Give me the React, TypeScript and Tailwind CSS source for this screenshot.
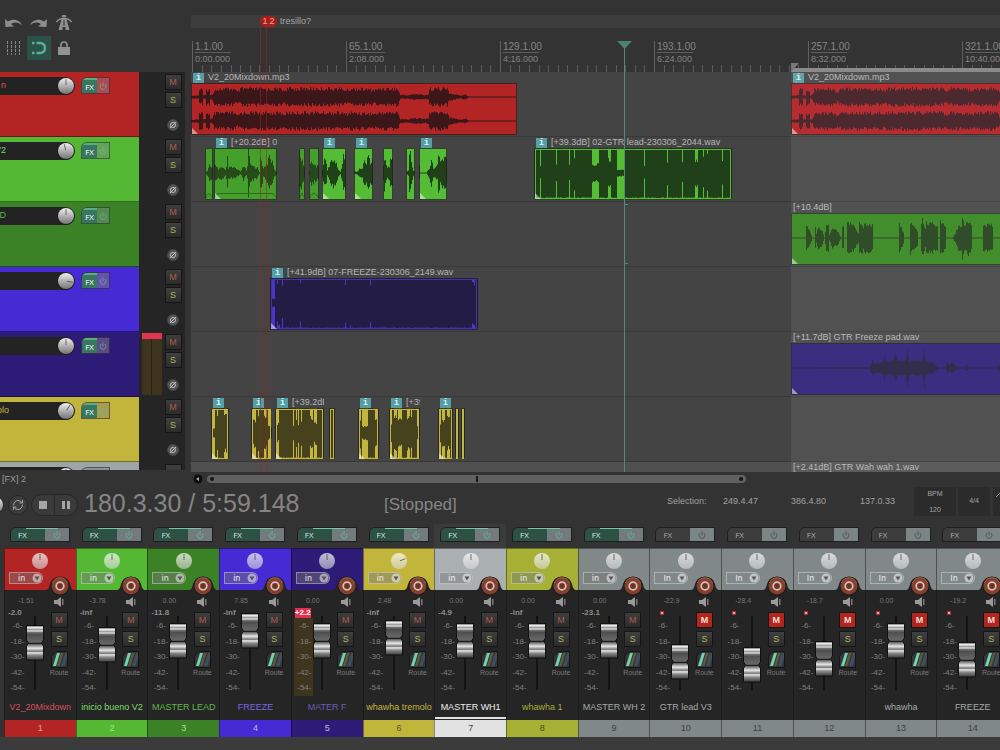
import React from "react";
import { Power, RefreshCw } from "lucide-react";

type Point = [number, number];

interface ClipProps {
    x: number;
    w: number;
    bg: string;
    ink: string;
    edge?: string;
    info?: boolean;
    label?: string;
    env: Point[];
    jitter?: number;
    stereo?: boolean;
    line?: boolean;
    fade?: boolean;
}

interface StripProps {
    name: string;
    color: string;
    text: string;
    numBg?: string;
    numText: string;
    vol: string;
    peak?: string;
    fader: number;
    pan?: number;
    muted?: boolean;
    clipped?: boolean;
    selected?: boolean;
    fxOn?: boolean;
}

interface TrackProps {
    name: string;
    color: string;
    text: string;
    pan: number;
    fxTint: string;
    meter?: boolean;
    folded?: boolean;
}

// ---------- waveforms ----------

const noise = (n: number) => {
    const v = Math.sin(n * 12.9898) * 43758.5453;
    return v - Math.floor(v);
};

const level = (env: Point[], x: number) => {
    for (let i = 1; i < env.length; i++) {
        const [x0, a0] = env[i - 1];
        const [x1, a1] = env[i];
        if (x <= x1) return a0 + ((a1 - a0) * (x - x0)) / Math.max(1, x1 - x0);
    }
    return 0;
};

// one column per pixel, each with its own height; columns at full level stay flat
const wavePath = (w: number, mid: number, amp: number, env: Point[], jitter: number, seed: number, flat: boolean) => {
    let d = "";
    for (let x = 0; x < w; x++) {
        const a = level(env, x) * amp;
        if (a < 0.1) continue;
        const j = flat ? (a < amp ? 0.3 : 0.02) : jitter;
        const up = a * (1 - j * noise(x + seed));
        const down = a * (1 - j * noise(x * 2 + seed + 7));
        d += `M${x} ${(mid - up).toFixed(1)}h1V${(mid + down).toFixed(1)}h-1Z`;
    }
    return d;
};

// full level with notches cut out: [center, half width, remaining level]
const carve = (w: number, notches: [number, number, number][]): Point[] => {
    const env: Point[] = [[0, 1]];
    notches.forEach(([c, h, a]) => {
        env.push([c - h, 1], [c - h + 1, a], [c + h - 1, a], [c + h, 1]);
    });
    env.push([w, 1]);
    return env;
};

const mixdown: Point[] = [
    [0, 0.15], [7, 0.2], [8, 0.9], [11, 0.9], [12, 0.2], [14, 0.2], [15, 0.9], [18, 0.9], [19, 0.2],
    [21, 0.3], [23, 0.9], [42, 1], [46, 0.6], [50, 1], [90, 0.95], [92, 0.75], [96, 1], [150, 1],
    [154, 0.8], [160, 1], [184, 0.85], [190, 1], [206, 1], [209, 0.25], [216, 0.2], [224, 0.35],
    [234, 0.25], [237, 0.3], [238, 1], [256, 1], [258, 0.4], [264, 0.3], [269, 0.15], [274, 0.3],
    [278, 0], [326, 0],
];

const leadWave: Point[] = [
    [0, 0], [14, 0], [15, 0.8], [17, 0.7], [20, 0.2], [21, 0], [23, 0], [24, 0.8], [25, 0.3], [27, 0.8],
    [31, 0.5], [33, 0], [35, 1], [37, 0.9], [38, 0.2], [41, 0.7], [46, 0.5], [49, 0.1], [50, 0], [51, 0.8],
    [52, 0.8], [53, 0], [55, 0], [56, 1.1], [62, 0.9], [67, 0.3], [68, 1.1], [71, 1], [72, 0.7], [73, 1],
    [81, 0.9], [82, 0], [107, 0], [108, 1], [112, 0.4], [113, 0], [118, 0], [119, 1.1], [126, 0.5],
    [127, 0], [129, 0], [130, 0.9], [131, 1.3], [134, 0.6], [135, 1.1], [146, 0.9], [147, 0], [148, 0],
    [149, 1.1], [154, 0.8], [155, 0], [161, 0], [164, 0.3], [166, 0.7], [168, 1], [170, 0.8], [171, 1.5],
    [173, 0.8], [177, 1.2], [180, 0.9], [181, 0], [191, 0], [192, 0.9], [201, 0.9], [202, 0], [211, 0],
];

const padWave: Point[] = [
    [0, 0], [78, 0.05], [81, 0.5], [84, 0.3], [90, 0.4], [92, 0.5], [93, 1], [94, 0.5], [102, 0.5],
    [104, 1], [106, 0.5], [114, 0.5], [116, 1.3], [118, 0.5], [131, 0.5], [133, 1.3], [134, 0.5],
    [142, 0.3], [146, 0.1], [147, 0], [154, 0.05], [156, 0.4], [158, 0.2], [160, 0.4], [165, 0.1],
    [168, 0], [172, 0], [175, 0.25], [178, 0], [205, 0], [207, 0.2], [211, 0.1],
];

const phrase: Point[] = [
    [0, 0.6], [4, 0.3], [7, 0.5], [11, 0.2], [12, 0.4], [13, 1.1], [14, 0.4], [20, 0.4], [26, 0.1],
    [29, 0.5], [32, 0.2], [33, 0.5], [34, 1.6], [35, 1.2], [36, 0.6], [43, 0.4], [45, 0.1], [46, 1.4],
    [47, 1.1], [49, 0.3], [52, 0.6], [55, 1.2], [58, 0.9], [60, 0.3], [62, 0.1], [63, 0],
];

const blob: Point[] = [[0, 0.3], [2, 1], [4, 0.9], [5, 0.2], [7, 0.5], [9, 1], [12, 1], [16, 0.3], [18, 0.1], [20, 0.6], [21, 1.4], [24, 1.3]];
const burst: Point[] = [[0, 0.1], [3, 0.1], [6, 0.4], [8, 0.3], [9, 0.9], [12, 0.7], [14, 1.4], [16, 0.8], [19, 1]];
const spike: Point[] = [[0, 0.1], [2, 0.2], [3, 1.2], [4, 1.6], [5, 0.8], [7, 0.2], [9, 0.1]];
const tail: Point[] = [[0, 0.5], [1, 0], [7, 0], [10, 0.4], [12, 1], [14, 0.3], [18, 0.6], [19, 1.4], [21, 0.9], [25, 1.2], [28, 1]];

const DIM = "#45a02b";
const GREEN = "#55bd35";
const MOSS = "#20401a";
const OLIVE = "#45421d";
const YELLOW = "#c2b640";

const yellow = (x: number, w: number, notches: [number, number, number][], rest: Partial<ClipProps> = {}): ClipProps => ({
    x, w, bg: YELLOW, ink: OLIVE, edge: YELLOW, env: carve(w, notches), ...rest,
});

const lanes: ClipProps[][] = [
    [
        { x: 0, w: 326, bg: "#b32424", ink: "#3b171a", info: true, label: "V2_20Mixdown.mp3", env: mixdown, stereo: true },
        { x: 600, w: 326, bg: "#b01c20", ink: "#3f191e", info: true, label: "V2_20Mixdown.mp3", env: mixdown, stereo: true },
    ],
    [
        { x: 14, w: 8, bg: DIM, ink: "#274a1b", env: [[0, 0], [2, 0.2], [4, 0.6], [8, 0.4]], line: true, fade: true },
        { x: 23, w: 63, bg: DIM, ink: "#274a1b", info: true, label: "[+20.2dB] 0", env: phrase, line: true, fade: true },
        { x: 108, w: 6, bg: DIM, ink: "#274a1b", env: [[0, 1.4], [3, 0.9], [6, 0.3]], fade: true },
        { x: 118, w: 10, bg: DIM, ink: "#274a1b", env: [[0, 0.2], [2, 1], [6, 0.6], [10, 0.4]], fade: true },
        { x: 131, w: 24, bg: GREEN, ink: MOSS, info: true, env: blob, line: true },
        { x: 163, w: 19, bg: GREEN, ink: MOSS, info: true, env: burst, line: true },
        { x: 192, w: 10, bg: GREEN, ink: MOSS, env: [[0, 0.5], [1, 1.2], [4, 0.4], [6, 0.5], [7, 1.1], [10, 0.9]] },
        { x: 215, w: 9, bg: GREEN, ink: MOSS, env: spike, line: true },
        { x: 228, w: 28, bg: GREEN, ink: MOSS, info: true, env: tail, line: true },
        {
            x: 343, w: 198, bg: GREEN, ink: MOSS, edge: GREEN, info: true,
            label: "[+39.3dB] 02-GTR lead-230306_2044.wav",
            env: carve(198, [
                [6, 1, 0.3], [22, 1, 0.4], [35, 1, 0.4], [40, 1, 0.8], [61, 4, 0.4], [75, 2, 0.6], [86, 4, 0.15],
                [110, 1, 0.3], [133, 1, 0.5], [148, 1, 0.5], [162, 2, 0.6], [169, 1, 0.8], [173, 1, 0.85], [188, 1, 0.6],
            ]),
        },
    ],
    [{ x: 600, w: 326, bg: "#34851c", ink: "#213f18", label: "[+10.4dB]", env: leadWave, line: true, jitter: 0.25 }],
    [{
        x: 79, w: 208, bg: "#4a35c8", ink: "#231c45", edge: "#4334a8", info: true,
        label: "[+41.9dB] 07-FREEZE-230306_2149.wav",
        env: carve(208, [[3, 2, 0.2], [8, 2, 0.95], [12, 1, 0.8], [30, 1, 0.95], [75, 1, 0.8], [80, 1, 0.95], [100, 1, 0.95], [203, 2, 0.9]]),
    }],
    [{ x: 600, w: 326, bg: "#2c1d76", ink: "#221d3c", label: "[+11.7dB] GTR Freeze pad.wav", env: padWave, line: true, jitter: 0.25 }],
    [
        yellow(20, 18, [[2, 2, 0.2], [6, 1, 0.7], [14, 2, 0.8], [16, 1, 0.4]], { info: true }),
        yellow(60, 21, [[3, 2, 0.6], [7, 1, 0.8], [14, 2, 0.7], [18, 3, 0.3]], { info: true }),
        yellow(84, 49, [[2, 2, 0.4], [18, 1, 0.3], [21, 1, 0.6], [23, 1, 0.4], [26, 1, 0.6], [36, 2, 0.7], [39, 3, 0.5]], { info: true, label: "[+39.2dB] 0" }),
        yellow(138, 6, []),
        yellow(167, 21, [[2, 1, 0.7], [6, 4, 0.3], [18, 2, 0.6]], { info: true }),
        yellow(198, 31, [[2, 1, 0.4], [6, 2, 0.8], [10, 3, 0.65], [19, 2, 0.7], [22, 1, 0.7], [28, 1, 0.3]], { info: true, label: "[+39.2dB]" }),
        yellow(247, 15, [[2, 1, 0.4], [5, 2, 0.6], [10, 2, 0.7]], { info: true }),
        yellow(264, 4, []),
        yellow(270, 4, []),
    ],
];

const Clip: React.FC<ClipProps> = ({ x, w, bg, ink, edge, info, label, env, jitter = 0.4, stereo, line, fade }: ClipProps) => {
    const mids = stereo ? [14, 38] : [25];
    const amp = edge ? 25 : stereo ? 10 : 16;
    return (
        <div className="absolute top-0" style={{ left: x, width: w }}>
            <div className="flex h-[11px] items-center gap-1 overflow-hidden whitespace-nowrap pl-[2px] text-[9px] leading-[11px] text-[#b4b4b4]">
                {info && (
                    <span className="flex h-[10px] w-[11px] shrink-0 items-center justify-center bg-[#559ea6] font-['Liberation_Mono'] text-[9px] font-bold leading-[10px] text-[#d8f0f0]">
                        i
                    </span>
                )}
                {label && <span>{label}</span>}
            </div>
            <svg className="block" width={w} height="52" viewBox={`0 0 ${w} 52`}>
                <rect width={w} height="52" fill={bg} />
                {mids.map((mid) => (
                    <g key={mid} fill={ink}>
                        {(line || stereo) && <rect x="0" y={mid - 0.5} width={w} height="1" />}
                        <path d={wavePath(w, mid, amp, env, jitter, x + mid, !!edge)} />
                    </g>
                ))}
                {fade && <path d={`M1 50V48L4 45.500H${w - 4}L${w - 1} 49`} fill="none" stroke="#2a6a1b" />}
                {edge && <rect x="1.5" y="1.5" width={w - 3} height="49" fill="none" stroke={edge} />}
                {w > 12 && <path d="M1 45L7 51H1Z" fill="#fff" opacity="0.5" />}
                <rect x="0.5" y="0.5" width={w - 1} height="51" fill="none" stroke="#1f1f1f" strokeOpacity="0.75" />
            </svg>
        </div>
    );
};

// ---------- shared controls ----------

const Knob: React.FC<{ angle?: number; label: string; dim?: boolean }> = ({ angle = 0, label, dim }) => (
    <label className="relative block size-[18px] shrink-0">
        <svg className="block size-[18px]" viewBox="0 0 18 18">
            <defs>
                <linearGradient id="knob" x1="0" y1="0" x2="0" y2="1">
                    <stop offset="0" stopColor="#efefef" />
                    <stop offset="1" stopColor="#737373" />
                </linearGradient>
                <linearGradient id="knobDim" x1="0" y1="0" x2="0" y2="1">
                    <stop offset="0" stopColor="#fff" stopOpacity="0.72" />
                    <stop offset="1" stopColor="#dcdcdc" stopOpacity="0.58" />
                </linearGradient>
            </defs>
            {!dim && <circle cx="9" cy="9.5" r="8.5" fill="#1a1a1a" />}
            <circle cx="9" cy="9" r="8" fill={dim ? "url(#knobDim)" : "url(#knob)"} />
            <path d="M9 2V8" stroke="#333" strokeOpacity="0.65" transform={`rotate(${angle} 9 9)`} />
        </svg>
        <input type="range" min="-100" max="100" defaultValue={angle} aria-label={label} className="absolute inset-0 size-full opacity-0" />
    </label>
);

const Mute: React.FC<{ on?: boolean }> = ({ on }) => (
    <button
        type="button"
        aria-label="Mute"
        className={`h-4 w-[17px] border border-[#161616] text-center text-[9px] leading-[13px] ${
            on ? "bg-[#b3261d] font-bold text-[#f3dcd8]" : "bg-gradient-to-b from-[#3e3e3e] to-[#2b2b2b] text-[#b05a4c]"
        }`}
    >
        M
    </button>
);

const Solo = () => (
    <button type="button" aria-label="Solo" className="h-4 w-[17px] border border-[#161616] bg-gradient-to-b from-[#404040] to-[#2b2b2b] text-center text-[9px] leading-[13px] text-[#b0b45a]">
        S
    </button>
);

// ---------- track panel ----------

const tracks: TrackProps[] = [
    { name: "n", color: "#b32424", text: "#e0515f", pan: 0, fxTint: "#a84d55" },
    { name: "V2", color: "#55b834", text: "#7ad865", pan: -15, fxTint: "#66a35a" },
    { name: "D", color: "#3b8126", text: "#58b445", pan: 0, fxTint: "#568a52" },
    { name: "", color: "#462ad4", text: "#8878e8", pan: 100, fxTint: "#6552ae" },
    { name: "", color: "#2c1c77", text: "#8878e8", pan: 0, fxTint: "#5b4a85", meter: true },
    { name: "olo", color: "#c2b53c", text: "#c2b53c", pan: 35, fxTint: "#a89b52" },
    { name: "", color: "#9ea5a6", text: "#fff", pan: 0, fxTint: "#8b9292", folded: true },
];

const Track: React.FC<TrackProps> = ({ name, color, text, pan, fxTint, meter, folded }: TrackProps) => (
    <li className="flex h-[65px] w-[185px] bg-[#252525]">
        <div className="flex w-[139px] items-start border-b border-black/40 pt-[5px]" style={{ backgroundColor: color }}>
            <div className="flex h-[18px] w-[75px] items-center justify-between rounded-r-full bg-[#232323]">
                <span className={`flex justify-end overflow-hidden text-[9px] ${name === "olo" ? "w-[9px]" : "w-[6px]"}`} style={{ color: text }}>
                    {name}
                </span>
                <Knob angle={pan} label="Track pan" />
            </div>
            <button type="button" className="ml-[6px] flex h-[17px] w-[29px] items-center overflow-hidden rounded-tl-md border border-black/40 text-white" style={{ backgroundColor: fxTint }}>
                {!folded && (
                    <span className="h-full w-[15px] border-t-2 border-[#58b07c] bg-[#377660] text-center font-['Open_Sans'] text-[8px] leading-[13px]">FX</span>
                )}
                <Power className="mx-auto size-[8px] text-[#70c090]" />
            </button>
        </div>
        <div className="flex w-[25px] justify-center pt-px">
            {meter && (
                <div className="flex h-[62px] w-[20px] flex-col bg-[#3f351f]">
                    <div className="h-[6px] bg-[#e5344f]" />
                    <div className="mx-auto w-px flex-1 bg-[#2a2418]" />
                </div>
            )}
        </div>
        <div className="flex w-[18px] flex-col items-center gap-[2px] pt-[2px]">
            {folded ? (
                <span className="h-4 w-[17px] border border-[#161616] bg-[#3c3c3c]" />
            ) : (
                <>
                    <Mute />
                    <Solo />
                    <button type="button" aria-label="Phase" className="mt-[9px]">
                        <svg className="size-3" viewBox="0 0 12 12" fill="none" stroke="#bbb">
                            <circle cx="6" cy="6" r="5.5" fill="#555" stroke="#444" />
                            <circle cx="6" cy="6" r="2.5" />
                            <path d="M3 9L9 3" />
                        </svg>
                    </button>
                </>
            )}
        </div>
    </li>
);

const Toolbar = () => (
    <div className="grid h-[72px] w-[76px] grid-cols-[26px_25px_25px] grid-rows-[24px_24px] place-items-center gap-y-px pt-[11px]">
        <button type="button" aria-label="Undo">
            <svg className="ml-px h-[11px] w-[19px]" viewBox="0 0 19 11" fill="#8e8e8e">
                <path d="M1 1L1.500 9L10 8.500L7 6C11 3.500 15 4.500 18 7.500C16 2.500 10 0 4 3.500Z" />
            </svg>
        </button>
        <button type="button" aria-label="Redo">
            <svg className="h-[11px] w-[19px]" viewBox="0 0 19 11" fill="#8e8e8e">
                <path d="M18 1L17.500 9L9 8.500L12 6C8 3.500 4 4.500 1 7.500C3 2.500 9 0 15 3.500Z" />
            </svg>
        </button>
        <button type="button" aria-label="Metronome">
            <svg className="size-4" viewBox="0 0 16 16" fill="#8e8e8e">
                <path d="M5.500 4H10.500L13.500 15H9.500V12H6.500V15H2.500Z" />
                <path d="M0.500 7C4 2 12 2 15.500 7" fill="none" stroke="#8e8e8e" strokeWidth="1.500" />
                <rect x="6" y="0" width="4" height="2" />
                <path d="M8 5V11" stroke="#333" />
            </svg>
        </button>
        <button type="button" aria-label="Grid lines">
            <svg className="h-[14px] w-[15px]" viewBox="0 0 15 14" stroke="#858585" strokeDasharray="3 1">
                <path d="M1.500 0V14M5.500 0V14M9.500 0V14M13.500 0V14" />
            </svg>
        </button>
        <button type="button" aria-label="Snap" className="flex size-6 items-center justify-center bg-[#2e5147]">
            <svg className="size-[14px]" viewBox="0 0 14 14" fill="none" stroke="#52b296" strokeWidth="2.500">
                <path d="M4.500 2H8A5 5 0 0 1 8 12H4.500M0 2H2.500M0 12H2.500" />
            </svg>
        </button>
        <button type="button" aria-label="Lock">
            <svg className="h-[14px] w-3" viewBox="0 0 12 14" fill="#929292">
                <rect y="6" width="12" height="8" />
                <path d="M3 7V4A3 3 0 0 1 9 4V7" fill="none" stroke="#929292" strokeWidth="1.600" />
            </svg>
        </button>
    </div>
);

// ---------- timeline ----------

const ruler = [
    ["1.1.00", "0:00.000"],
    ["65.1.00", "2:08.000"],
    ["129.1.00", "4:16.000"],
    ["193.1.00", "6:24.000"],
    ["257.1.00", "8:32.000"],
    ["321.1.00", "10:40.000"],
];

const Ruler = () => (
    <div className="relative h-[72px] pt-[15px]">
        <div className="h-[13px] bg-[#3c3c3c] pl-[69px]">
            <div className="flex h-[13px] items-center text-[9px] text-[#a6a6a6]">
                <span className="flex w-[17px] justify-center gap-[2px] rounded-full bg-[#a91f18] leading-[11px] text-[#e0a8a4]">
                    <span>1</span>
                    <span>2</span>
                </span>
                <span className="ml-[3px]">tresillo?</span>
            </div>
        </div>
        <ol className="mt-[13px] flex h-[31px] overflow-hidden pl-px">
            {ruler.map(([bar, time]) => (
                <li key={bar} className="flex w-[154px] shrink-0 flex-col border-l border-[#606060] text-[#858585]">
                    <span className="ml-[2px] w-9 border-b border-[#5c5c5c] pt-px text-[10px] leading-[10px]">{bar}</span>
                    <span className="ml-[2px] text-[9px] leading-[12px]">{time}</span>
                    <svg className="mt-auto h-[7px] w-[154px]" viewBox="0 0 154 7">
                        {Array.from({ length: 15 }, (_, i) => (
                            <rect key={i} x={Math.round((i + 1) * 9.63) - 1} y="0" width="1" height="7" fill="#5a5a5a" />
                        ))}
                    </svg>
                </li>
            ))}
        </ol>
        <div className="absolute bottom-0 left-[600px] right-0 h-1 bg-[#8a8a8a]" />
        <svg className="absolute bottom-0 left-[600px] h-[9px] w-2" viewBox="0 0 8 9" fill="#777">
            <path d="M0 0H8L0 9Z" />
        </svg>
    </div>
);

const Timeline = () => (
    <section aria-label="Arrange" className="relative min-w-0 flex-1 overflow-hidden">
        <Ruler />
        <div className="relative bg-[#444]">
            {lanes.map((clips, i) => (
                <div key={i} className="relative h-[65px] border-b border-[#393939]">
                    {clips.map((clip) => (
                        <Clip key={clip.x} {...clip} />
                    ))}
                </div>
            ))}
            <div className="relative h-[10px] overflow-hidden bg-[#505050]">
                <span className="absolute left-[602px] whitespace-nowrap text-[9px] leading-[10px] text-[#b4b4b4]">[+2.41dB] GTR Wah wah 1.wav</span>
            </div>
            <div className="pointer-events-none absolute inset-y-0 left-[600px] right-0 bg-white/[0.07]" />
        </div>
        {/* marker lines and edit cursor */}
        <div className="absolute bottom-0 left-[69px] top-[27px] w-[7px] border-x border-[#a02020]/55" />
        <div className="absolute bottom-0 left-[433px] top-[41px] w-px bg-[#53897a]" />
        <svg className="absolute left-[426px] top-[41px] h-[8px] w-[15px]" viewBox="0 0 15 8" fill="#4c8271">
            <path d="M0 0H15L7.500 8Z" />
        </svg>
        <div className="absolute left-[433px] top-[204px] h-[60px] w-[4px] border-y border-l border-[#53897a]" />
    </section>
);

// ---------- transport ----------

const Transport = () => (
    <section aria-label="Transport" className="flex h-[38px] items-center">
        <div className="-ml-[14px] shrink-0">
            <Knob label="Play rate" />
        </div>
        <button type="button" aria-label="Repeat" className="ml-[4px] flex size-5 shrink-0 items-center justify-center rounded-full border border-[#262626] bg-[#3c3c3c]">
            <RefreshCw className="size-3 text-[#a5a5a5]" />
        </button>
        <div className="ml-[3px] flex h-[22px] w-[47px] shrink-0 overflow-hidden rounded-full border border-[#262626] bg-[#3a3a3a]">
            <button type="button" aria-label="Stop" className="flex flex-1 items-center justify-center border-r border-[#2a2a2a]">
                <span className="size-2 bg-[#a5a5a5]" />
            </button>
            <button type="button" aria-label="Pause" className="flex flex-1 items-center justify-center gap-[2px]">
                <span className="h-2 w-[3px] bg-[#a5a5a5]" />
                <span className="h-2 w-[3px] bg-[#a5a5a5]" />
            </button>
        </div>
        <output className="ml-[6px] w-[300px] shrink-0 whitespace-nowrap pb-1 text-[25px] leading-[30px] text-[#858585]">180.3.30 / 5:59.148</output>
        <output className="flex-1 text-[17px] leading-5 text-[#858585]">[Stopped]</output>
        <dl className="flex shrink-0 pb-2 text-[9px] leading-3 text-[#a0a0a0]">
            <dt className="w-[56px]">Selection:</dt>
            <dd className="w-[68px]">249.4.47</dd>
            <dd className="w-[69px]">386.4.80</dd>
            <dd className="w-[54px]">137.0.33</dd>
        </dl>
        <label className="mb-2 flex h-[29px] w-[42px] shrink-0 flex-col items-center justify-between bg-[#2b2b2b] py-[2px] text-[7px] leading-[9px] text-[#a5a5a5]">
            BPM
            <input type="text" defaultValue="120" className="w-full bg-transparent text-center" />
        </label>
        <button type="button" className="mb-2 ml-[2px] h-[29px] w-[32px] shrink-0 bg-[#2b2b2b] text-[7px] text-[#a5a5a5]">4/4</button>
        <div className="mb-2 ml-[3px] h-[29px] w-[7px] shrink-0 bg-[#2b2b2b] pt-[6px]">
            <svg className="ml-[3px] h-1 w-1" viewBox="0 0 4 4">
                <path d="M0 4L4 0" stroke="#999" />
            </svg>
        </div>
    </section>
);

// ---------- mixer ----------

const GREY = "#808988";

const strips: StripProps[] = [
    { name: "V2_20Mixdown", color: "#b32424", text: "#d25358", numText: "#e8a0a0", vol: "-1.51", peak: "-2.0", fader: 18, fxOn: true },
    { name: "inicio bueno V2", color: "#55b834", text: "#7fdc66", numText: "#a0e888", vol: "-3.78", peak: "-inf", fader: 20, fxOn: true },
    { name: "MASTER LEAD", color: "#3b8126", text: "#5cba48", numText: "#b0dca4", vol: "0.00", peak: "-11.8", fader: 16, fxOn: true },
    { name: "FREEZE", color: "#462ad4", text: "#7868e0", numText: "#c0b8f0", vol: "7.85", peak: "-inf", fader: 6, fxOn: true },
    { name: "MATER F", color: "#2c1c77", text: "#6c5cb8", numText: "#c0b8e0", vol: "0.00", peak: "+2.2", fader: 16, clipped: true, fxOn: true },
    { name: "whawha tremolo", color: "#c2b53c", text: "#c2b53c", numText: "#5c5620", vol: "2.48", peak: "-inf", fader: 13, pan: 70, fxOn: true },
    { name: "MASTER WH1", color: "#aab0b1", text: "#f0f0f0", numBg: "#e2e2e2", numText: "#444", vol: "0.00", peak: "-4.9", fader: 16, selected: true, fxOn: true },
    { name: "whawha 1", color: "#a5b035", text: "#a5b035", numText: "#454b18", vol: "0.00", peak: "-inf", fader: 16, fxOn: true },
    { name: "MASTER WH 2", color: GREY, text: "#a3a8a8", numText: "#3c4242", vol: "0.00", peak: "-23.1", fader: 16, fxOn: true },
    { name: "GTR lead V3", color: GREY, text: "#a3a8a8", numText: "#3c4242", vol: "-22.9", fader: 37, muted: true },
    { name: "", color: GREY, text: "#a3a8a8", numText: "#3c4242", vol: "-28.4", fader: 40, muted: true },
    { name: "", color: GREY, text: "#a3a8a8", numText: "#3c4242", vol: "-18.7", fader: 34, muted: true },
    { name: "whawha", color: GREY, text: "#a3a8a8", numText: "#3c4242", vol: "0.00", fader: 16, muted: true },
    { name: "FREEZE", color: GREY, text: "#a3a8a8", numText: "#3c4242", vol: "-19.2", fader: 35, muted: true },
];

const Fader: React.FC<{ y: number }> = ({ y }) => (
    <label className="relative block h-[86px] w-[18px] shrink-0">
        <svg className="block h-[86px] w-[18px]" viewBox="0 0 18 86">
            <defs>
                <linearGradient id="cap" x1="0" y1="0" x2="0" y2="1">
                    <stop offset="0" stopColor="#4c4c4c" />
                    <stop offset="0.06" stopColor="#f0f0f0" />
                    <stop offset="0.12" stopColor="#9a9a9a" />
                    <stop offset="0.16" stopColor="#e0e0e0" />
                    <stop offset="0.2" stopColor="#707070" />
                    <stop offset="0.26" stopColor="#4e4e4e" />
                    <stop offset="0.46" stopColor="#666" />
                    <stop offset="0.52" stopColor="#444" />
                    <stop offset="0.66" stopColor="#e8e8e8" />
                    <stop offset="0.75" stopColor="#777" />
                    <stop offset="0.79" stopColor="#e8e8e8" />
                    <stop offset="0.86" stopColor="#888" />
                    <stop offset="1" stopColor="#3a3a3a" />
                </linearGradient>
            </defs>
            <rect x="8" y="9" width="2" height="74" fill="#121212" />
            <g transform={`translate(0 ${y})`}>
                <path d="M0.500 0.500H17.500V15L15.500 18L17.500 21V35H0.500V21L2.500 18L0.500 15Z" fill="url(#cap)" stroke="#111" />
                <path d="M3 18.500H15" stroke="#1c1c1c" />
            </g>
        </svg>
        <input type="range" min="0" max="50" defaultValue={50 - y} aria-label="Volume" className="absolute inset-0 size-full opacity-0" />
    </label>
);

const Strip: React.FC<StripProps & { index: number }> = (s) => (
    <article className="min-w-0">
        <div className={`h-6 pl-[6px] pt-[3px] ${s.selected ? "bg-[#3b3b3b]" : ""}`}>
            <button type="button" className="relative flex h-[15px] w-[60px] overflow-hidden rounded-tl-md border border-[#1e1e1e] text-white">
                <span className={`flex h-full flex-1 items-center pl-[7px] font-['Open_Sans'] text-[8px] ${s.fxOn ? "bg-[#2d5145] text-[#d8e8e0]" : "bg-[#3c3c3c] text-[#aaa]"}`}>
                    FX
                </span>
                <span className={`flex h-full w-[24px] items-center justify-center ${s.fxOn ? "bg-[#747b7c] text-[#62c8a0]" : "bg-[#7b8583] text-[#444]"}`}>
                    <Power className="size-[8px]" />
                </span>
                {s.fxOn && <span className="absolute left-[15px] top-0 h-px w-[32px] bg-[#74c8a0]" />}
            </button>
        </div>
        <header className="relative h-[42px] border-l border-t border-black/40 pt-[3px]" style={{ backgroundColor: s.color }}>
            <div className="flex justify-center">
                <Knob angle={s.pan} label="Pan" dim />
            </div>
            <div className="relative ml-[4px] mt-[2px] h-[12px] w-[34px]">
                <select
                    aria-label="Input"
                    className={`block h-[12px] w-full appearance-none rounded-r-full border border-white/35 pl-[8px] font-['Open_Sans'] text-[8px] font-semibold leading-[10px] text-white/75 ${s.muted ? "" : "bg-[#777]/45"}`}
                >
                    <option>{s.muted ? "In" : "in"}</option>
                </select>
                <svg className="pointer-events-none absolute right-px top-px size-[10px]" viewBox="0 0 10 10">
                    <circle cx="5" cy="5" r="4.500" fill="#fff" fillOpacity="0.5" />
                    <path d="M2.500 3.500H7.500L5 7.500Z" fill="#555" />
                </svg>
            </div>
            <button type="button" aria-label="Record arm" className="absolute right-0 top-[26px]">
                <svg className="block h-[22px] w-[32px]" viewBox="0 0 32 22">
                    <path d="M1 15.500Q5 15 6 9A10.500 10.500 0 0 1 26 9Q27 15 31 15.500Z" fill="#242424" />
                    <circle cx="16" cy="11" r="9.500" fill="#1c1c1c" />
                    <circle cx="16" cy="11" r="8.500" fill="#84402f" />
                    <path d="M8.500 8A8 8 0 0 1 23.500 8" fill="none" stroke="#a0604e" />
                    <circle cx="16" cy="11" r="3.800" fill="#6e3226" stroke="#d8c0b8" strokeWidth="1.800" />
                </svg>
            </button>
        </header>
        <div className="flex h-[110px] border-l border-[#1b1b1b] bg-[#252525]">
            <div className="w-[42px] shrink-0 pt-[6px]">
                <div className="text-center text-[7px] leading-[10px] text-[#767676]">{s.vol}</div>
                <div className="mt-px flex">
                    <div className="w-[21px] shrink-0">
                        <div className="flex h-[11px] items-center whitespace-nowrap pl-[3px] text-[8px] font-bold leading-[10px] text-[#8c8c8c]">
                            {s.clipped ? <span className="bg-[#e3304f] text-white">{s.peak}</span> : s.peak}
                            {s.muted && <span className="ml-[7px] size-[4px] border border-[#a33] bg-[#e8a0a0]" />}
                        </div>
                        <ul className={`ml-[2px] flex h-[78px] flex-col justify-between py-1 pl-[2px] text-[8px] leading-[8px] text-[#808080] ${s.clipped ? "bg-[#3f351f]" : ""}`}>
                            {[6, 18, 30, 42, 54].map((db) => (
                                <li key={db} className="text-center">-{db}-</li>
                            ))}
                        </ul>
                    </div>
                    <Fader y={s.fader} />
                </div>
            </div>
            <div className="flex w-[24px] shrink-0 flex-col items-center pt-[7px]">
                <button type="button" aria-label="Monitor">
                    <svg className="block h-[10px] w-[10px]" viewBox="0 0 10 10" fill="#9a9a9a">
                        <path d="M0 3H3L7 0V10L3 7H0Z" />
                        <rect x="8" y="2" width="1.500" height="6" opacity="0.7" />
                    </svg>
                </button>
                <div className="mt-[5px] flex flex-col items-center gap-[3px]">
                    <Mute on={s.muted} />
                    <Solo />
                    <button type="button" className="mt-px flex w-[24px] flex-col items-center text-[7px] leading-[10px] text-[#7a7a7a]">
                        <svg className="block h-[17px] w-[17px]" viewBox="0 0 17 17">
                            <path d="M5 0.500H16.500V16.500H0.500V5Z" fill="#363636" stroke="#161616" />
                            <path d="M6 2H9L5 15H2Z" fill="#6fd3b4" />
                            <path d="M10 2H12.500L8.500 15H6Z" fill="#5c5a40" />
                            <path d="M14 2H16V7L13.500 15H10Z" fill="#3e5060" />
                        </svg>
                        Route
                    </button>
                </div>
            </div>
        </div>
        <div className="flex h-[20px] flex-col items-stretch overflow-hidden whitespace-nowrap border-l border-[#1b1b1b] bg-[#252525] text-center">
            <h2 className="h-[17px] text-[9px] leading-[14px]" style={{ color: s.text }}>{s.name}</h2>
            {s.selected && <div className="h-[2px] bg-[#e2e2e2]" />}
        </div>
        <div className="h-[17px] border-l border-black/40 text-center text-[9px] leading-[16px]" style={{ backgroundColor: s.numBg ?? s.color, color: s.numText }}>
            {s.index}
        </div>
    </article>
);

const App = () => (
    <main className="flex min-h-screen flex-col overflow-hidden bg-[#333] font-['Liberation_Sans',sans-serif]">
        <div className="flex">
            <aside className="w-[191px] shrink-0">
                <Toolbar />
                <ul className="h-[398px] overflow-hidden">
                    {tracks.map((t, i) => (
                        <Track key={i} {...t} />
                    ))}
                </ul>
            </aside>
            <Timeline />
        </div>
        <div className="flex h-[14px] items-center">
            <span className="w-[193px] shrink-0 pl-[2px] text-[9px] leading-[10px] text-[#999]">[FX] 2</span>
            <button type="button" aria-label="Scroll left">
                <svg className="block size-[10px]" viewBox="0 0 10 10">
                    <circle cx="5" cy="5" r="4.500" fill="#0e0e0e" />
                    <path d="M3 5L6 3V7Z" fill="#aaa" />
                </svg>
            </button>
            <div className="ml-1 flex h-[8px] w-[539px] items-center justify-between rounded-full bg-[#606060] px-[3px]">
                <span className="size-[4px] rounded-full bg-[#161616]" />
                <span className="h-[6px] w-[2px] bg-[#161616]" />
                <span className="size-[4px] rounded-full bg-[#161616]" />
            </div>
        </div>
        <Transport />
        <section aria-label="Mixer" className="-mr-2 ml-1 grid grid-cols-14">
            {strips.map((s, i) => (
                <Strip key={i} {...s} index={i + 1} />
            ))}
        </section>
        <footer className="flex-1 bg-[#3b3b3b]" />
    </main>
);

export default App;
